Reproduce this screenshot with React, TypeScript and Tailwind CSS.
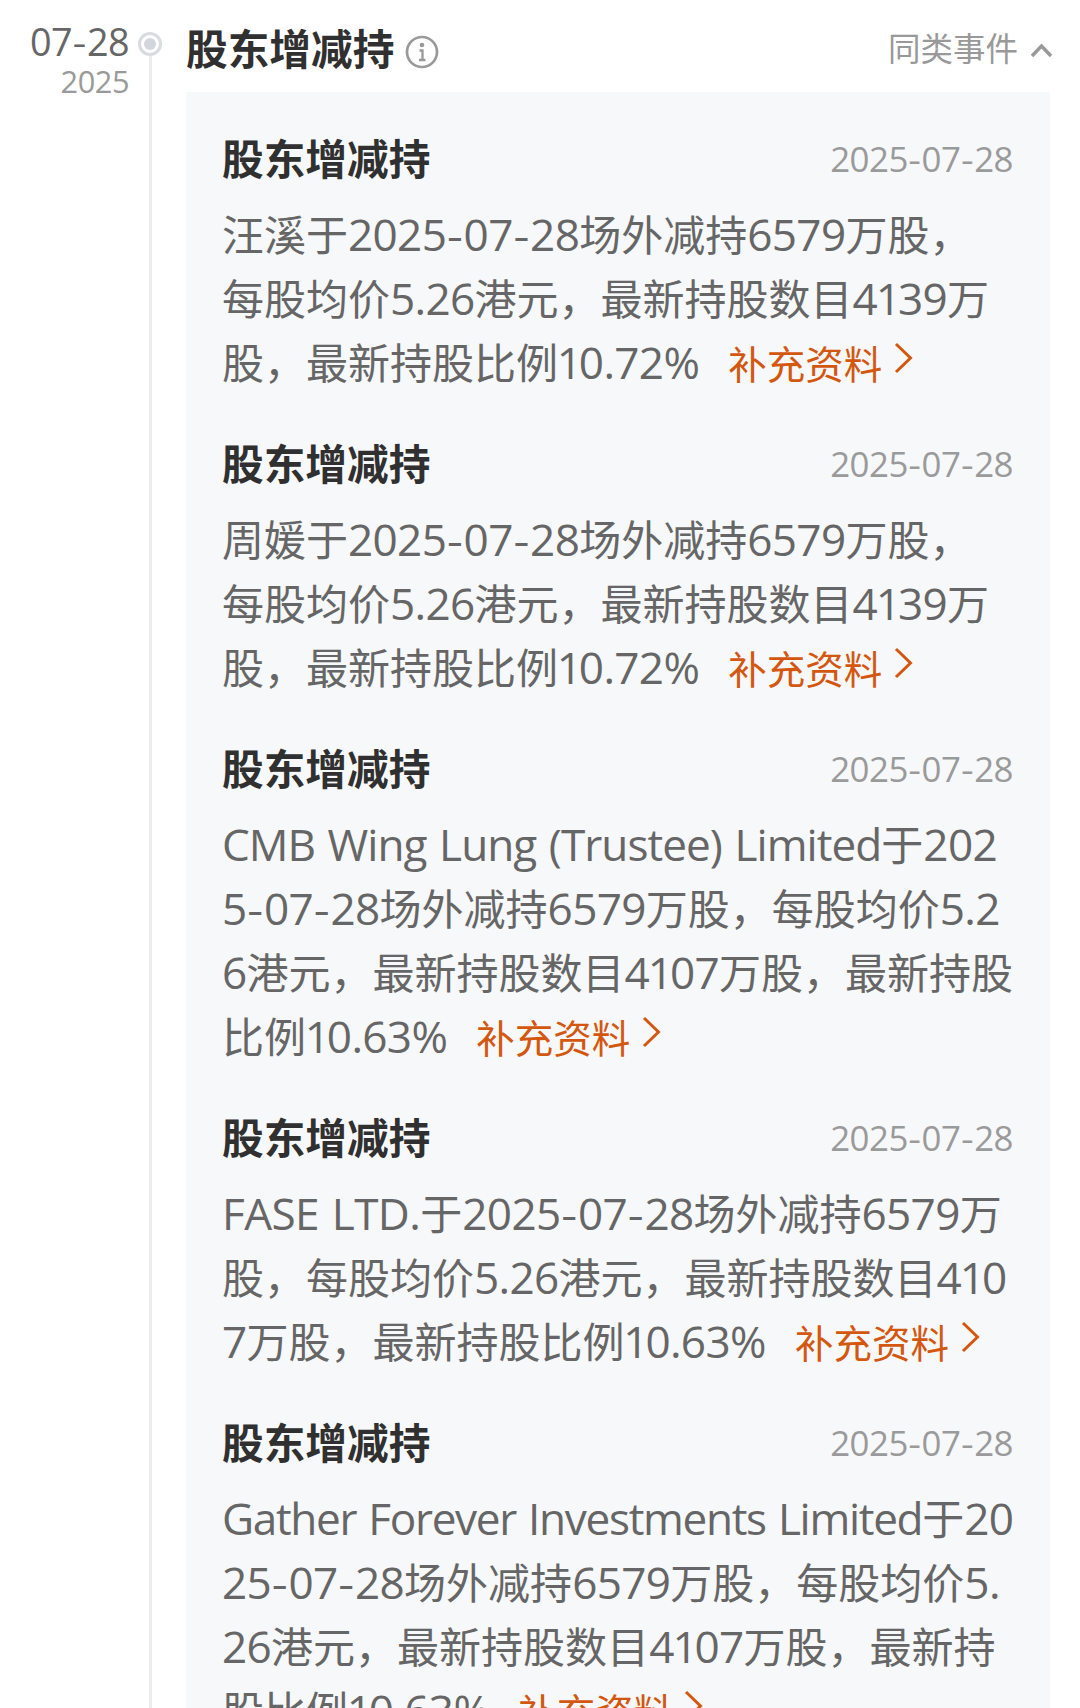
import React from "react";

type EventType = {
  id: number;
  title: string;
  date: string;
  lines: string[];
  nameClass?: string;
};

const events: EventType[] = [
  {
    id: 1,
    title: "股东增减持",
    date: "2025-07-28",
    lines: ["汪溪于2025-07-28场外减持6579万股，", "每股均价5.26港元，最新持股数目4139万", "股，最新持股比例10.72%"],
  },
  {
    id: 2,
    title: "股东增减持",
    date: "2025-07-28",
    lines: ["周媛于2025-07-28场外减持6579万股，", "每股均价5.26港元，最新持股数目4139万", "股，最新持股比例10.72%"],
  },
  {
    id: 3,
    title: "股东增减持",
    date: "2025-07-28",
    nameClass: "tracking-[-0.950px] [word-spacing:2px]",
    lines: [
      "CMB Wing Lung (Trustee) Limited于202",
      "5-07-28场外减持6579万股，每股均价5.2",
      "6港元，最新持股数目4107万股，最新持股",
      "比例10.63%",
    ],
  },
  {
    id: 4,
    title: "股东增减持",
    date: "2025-07-28",
    nameClass: "tracking-[-0.600px] [word-spacing:2px]",
    lines: ["FASE LTD.于2025-07-28场外减持6579万", "股，每股均价5.26港元，最新持股数目410", "7万股，最新持股比例10.63%"],
  },
  {
    id: 5,
    title: "股东增减持",
    date: "2025-07-28",
    nameClass: "tracking-[-1.320px] [word-spacing:2px]",
    lines: [
      "Gather Forever Investments Limited于20",
      "25-07-28场外减持6579万股，每股均价5.",
      "26港元，最新持股数目4107万股，最新持",
      "股比例10.63%",
    ],
  },
];

// Latin text is set slightly larger than the Chinese text around it
const MixedText: React.FC<{ text: string; nameClass?: string }> = ({ text, nameClass = "" }) => {
  const runs = text.match(/-|1|%|[A-Za-z(][A-Za-z(). ]*|[02-9.]+|[^\x00-\x7f]+/g) ?? [];
  return (
    <>
      {runs.map((run, i) => {
        if (run === "-") {
          return <span key={i} className="font-['Inter'] text-[0.9em] leading-none">-</span>;
        }
        if (run === "1") {
          return <span key={i} className="ml-[-0.030em] font-['Open_Sans'] text-[1.05em] leading-none tracking-[-0.070em]">1</span>;
        }
        if (run === "%") {
          return <span key={i} className="font-['Open_Sans'] text-[1.05em] leading-none tracking-[-0.080em]">%</span>;
        }
        if (/^[A-Za-z(]/.test(run)) {
          return <span key={i} className={`font-['Open_Sans'] text-[1.05em] leading-none ${nameClass}`}>{run}</span>;
        }
        if (/^[\x00-\x7f]/.test(run)) {
          return <span key={i} className="font-['Open_Sans'] text-[1.05em] leading-none tracking-[-0.015em]">{run}</span>;
        }
        return <span key={i}>{run}</span>;
      })}
    </>
  );
};

const MoreLink: React.FC = () => (
  <a href="#" className="ml-[32px] text-[38.500px] leading-none text-[#d4570f]">
    补充资料
    <svg className="ml-[12px] inline-block h-[32px] w-[20px] align-[5px]" viewBox="0 0 20 32" fill="none" stroke="currentColor" strokeWidth="3">
      <path d="M2 2L16.500 16L2 30" />
    </svg>
  </a>
);

const EventItem: React.FC<{ event: EventType }> = ({ event }) => (
  <div>
    <div className="flex h-16 items-center justify-between">
      <h3 className="text-[41.700px] leading-[64px] font-bold text-[#303030]">{event.title}</h3>
      <span className="pt-[2px] text-[33.200px] leading-[64px] text-[#9a9a9a]">
        <MixedText text={event.date} />
      </span>
    </div>
    <div className="mt-3 text-[42px] leading-[64px] text-[#666]">
      {event.lines.map((line, i) => (
        <p key={i} className="h-16 whitespace-pre">
          <MixedText text={line} nameClass={event.nameClass} />
          {i === event.lines.length - 1 && <MoreLink />}
        </p>
      ))}
    </div>
  </div>
);

const App: React.FC = () => {
  return (
    <div className="flex h-[1708px] w-[1080px] overflow-hidden bg-white font-['Noto_Sans_CJK_SC',sans-serif]">
      {/* Date column */}
      <div className="w-[129px] shrink-0 pt-[18px] text-right whitespace-nowrap">
        <div className="h-[44px] text-[36px] leading-[44px] text-[#666]">
          <MixedText text="07-28" />
        </div>
        <div className="h-[36px] text-[29.300px] leading-[36px] text-[#9a9a9a]">
          <MixedText text="2025" />
        </div>
      </div>

      {/* Timeline rail */}
      <div className="ml-[9px] flex w-6 shrink-0 flex-col items-center pt-8">
        <div className="flex size-6 shrink-0 items-center justify-center rounded-full border-[3px] border-[#d8dbe0]">
          <div className="size-3 rounded-full bg-[#d3d6dc]" />
        </div>
        <div className="w-[3px] grow bg-[#ececee]" />
      </div>

      <div className="ml-[24px] w-[864px] shrink-0">
        <div className="flex h-[92px] items-center pt-px">
          <h2 className="text-[41.700px] leading-[64px] font-bold text-[#303030]">股东增减持</h2>
          <svg className="mt-[11px] ml-[11px] size-[34px]" viewBox="0 0 34 34" fill="none" stroke="#999" strokeWidth="2.700">
            <circle cx="17" cy="17" r="15" />
            <circle cx="17" cy="10" r="2.300" fill="#999" stroke="none" />
            <path d="M14.500 15.500h3v9.500M14 25h6.500" strokeWidth="2.300" />
          </svg>
          <div className="mr-[-3px] ml-auto flex items-center text-[#999]">
            <span className="text-[32.500px] leading-[64px]">同类事件</span>
            <svg className="mt-[8px] ml-3 h-[16px] w-[23px]" viewBox="0 0 23 16" fill="none" stroke="currentColor" strokeWidth="3.400">
              <path d="M2 13L11.500 3L21 13" />
            </svg>
          </div>
        </div>
        <div className="flex w-[864px] flex-col gap-[37px] bg-[#f7f8fa] pt-[33px] pr-[37px] pl-[36px]">
          {events.map((event) => (
            <EventItem key={event.id} event={event} />
          ))}
        </div>
      </div>
    </div>
  );
};

export default App;
